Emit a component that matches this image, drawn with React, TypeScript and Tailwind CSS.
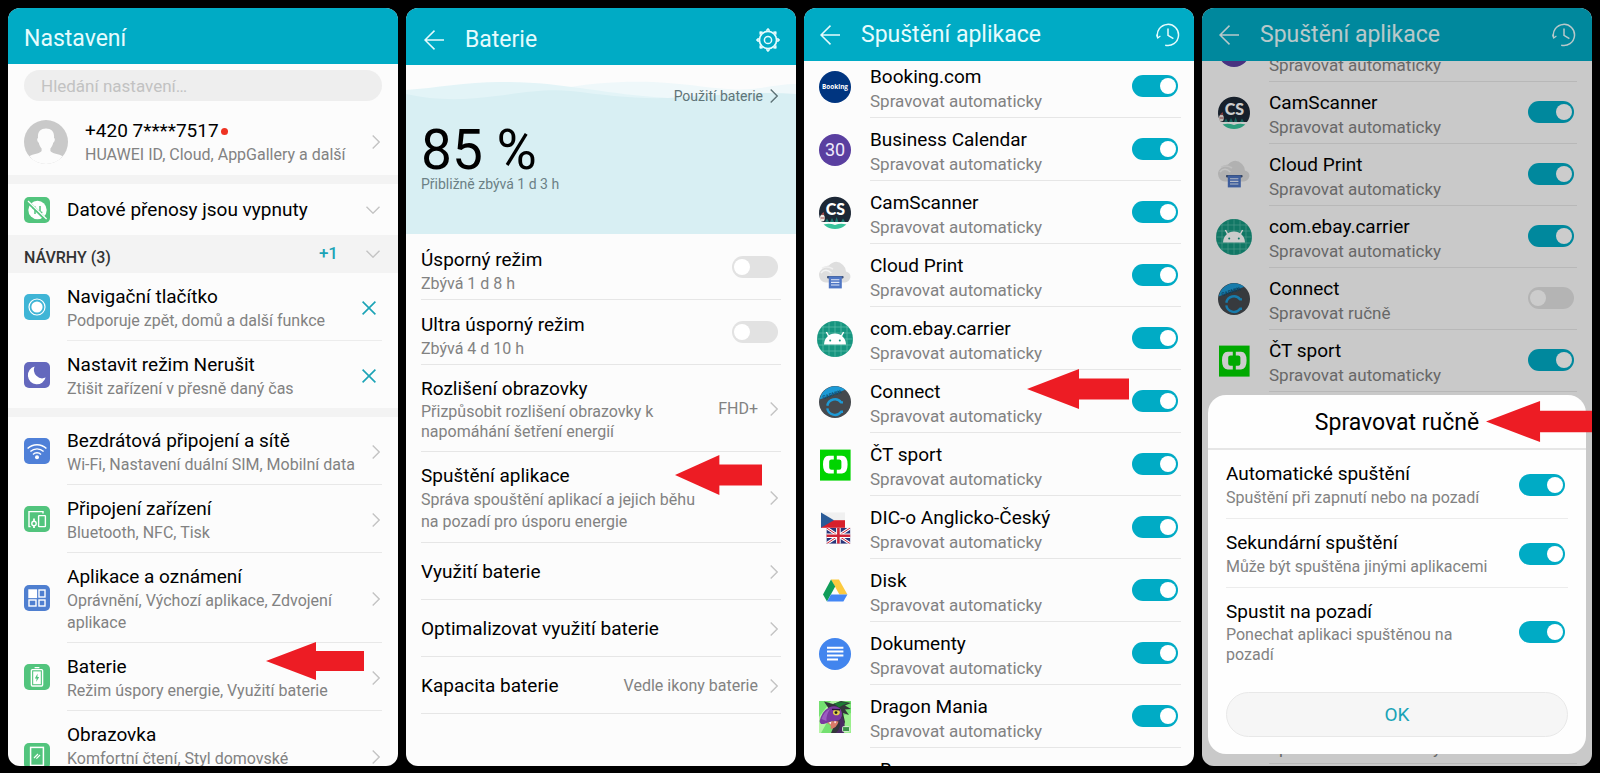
import * as React from "react";
import { clsx } from "clsx";

type SettingItem = { title: string; sub: string; icon: React.ReactNode; tall?: boolean; marked?: boolean };
type AppItem = { name: string; icon?: React.ReactNode; manual?: boolean; marked?: boolean };

/* --------------------------------- Shared --------------------------------- */

const titleText = "block text-[19px] leading-[26px] text-black";
const subText = "block text-[16px] leading-[22px] text-[#828282]";

function ChevronRight({ className = "text-[#c4c4c4]" }: { className?: string }) {
  return (
    <svg viewBox="0 0 8 14" className={clsx("h-3.5 w-2 shrink-0", className)} fill="none" stroke="currentColor" strokeWidth="1.4">
      <path d="M0.7 0.5 L7.2 7 L0.7 13.5" />
    </svg>
  );
}

function ChevronDown() {
  return (
    <svg viewBox="0 0 14 8" className="h-2 w-3.5 shrink-0 text-[#c4c4c4]" fill="none" stroke="currentColor" strokeWidth="1.4">
      <path d="M0.5 0.7 L7 7.2 L13.5 0.7" />
    </svg>
  );
}

function BackButton() {
  return (
    <button type="button" aria-label="Zpět" className="shrink-0">
      <svg viewBox="0 0 20 20" className="size-5" fill="none" stroke="#e6fbfd" strokeWidth="1.5">
        <path d="M10.5 0.6 L1 10 L10.5 19.4 M1 10 H20" />
      </svg>
    </button>
  );
}

function HistoryIcon() {
  return (
    <svg viewBox="0 0 24 24" className="size-6" fill="none" stroke="#e6fbfd" strokeWidth="1.5">
      <path d="M1.6 14.4 A10.6 10.6 0 1 1 9.2 22.2" />
      <path d="M0.6 11.6 L1.7 15 L4.4 13" strokeWidth="1.2" />
      <path d="M12 5.6 V12.4 L17.4 15.6" />
    </svg>
  );
}

function GearIcon() {
  const teeth = [0, 45, 90, 135, 180, 225, 270, 315];
  return (
    <svg viewBox="0 0 24 24" className="size-6" fill="none" stroke="#e6fbfd">
      <circle cx="12" cy="12" r="8.6" strokeWidth="1.7" />
      <circle cx="12" cy="12" r="3.6" strokeWidth="1.5" />
      {teeth.map((a) => (
        <path key={a} d="M10.4 2.8 L12 1 L13.6 2.8" strokeWidth="1.7" strokeLinejoin="round" transform={`rotate(${a} 12 12)`} />
      ))}
    </svg>
  );
}

function RedArrow({ className }: { className: string }) {
  return (
    <svg viewBox="0 0 100 40" preserveAspectRatio="none" className={clsx("pointer-events-none absolute z-10", className)} fill="#ed1c24">
      <path d="M0 20 L51 0 V9.4 H100 V30.6 H51 V40 Z" />
    </svg>
  );
}

function Toggle({ on }: { on: boolean }) {
  return (
    <input
      type="checkbox"
      role="switch"
      defaultChecked={on}
      className="flex h-[22px] w-[46px] shrink-0 appearance-none items-center rounded-full bg-[#e2e2e2] px-0.5 before:size-4 before:rounded-full before:bg-white checked:justify-end checked:bg-[#00abc5]"
    />
  );
}

function Phone({ children }: { children: React.ReactNode }) {
  return (
    <section className="relative flex min-w-0 flex-1 flex-col overflow-hidden rounded-xl bg-[#fcfcfc]">{children}</section>
  );
}

/* ------------------------------ Settings icons ----------------------------- */

function Tile({ color, children }: { color: string; children: React.ReactNode }) {
  return (
    <svg viewBox="0 0 26 26" className="size-[26px] shrink-0" fill="none" stroke="#fff" strokeWidth="1.4">
      <rect width="26" height="26" rx="5" fill={color} stroke="none" />
      {children}
    </svg>
  );
}

const dataOffIcon = (
  <Tile color="#52c47d">
    <circle cx="13.5" cy="13" r="9.2" fill="#fff" stroke="none" />
    <path d="M11 17 V9.6 M8.8 11.8 L11 9.6 M16 9 V17 M16 17 L18.2 14.8" stroke="#52c47d" strokeWidth="1.5" />
    <path d="M3.6 4.6 L22 22.6" stroke="#52c47d" strokeWidth="3.2" />
    <path d="M4 4 L22.6 22" strokeWidth="1.3" />
  </Tile>
);
const navIcon = (
  <Tile color="#3fb5d6">
    <circle cx="13" cy="13" r="8" strokeWidth="1.2" />
    <circle cx="13" cy="13" r="5.6" fill="#fff" stroke="none" />
  </Tile>
);
const moonIcon = (
  <Tile color="#6468bd">
    <path d="M10.6 4.6 A9 9 0 1 0 21.6 15.6 A8.4 8.4 0 0 1 10.6 4.6 Z" fill="#fff" stroke="none" />
  </Tile>
);
const wifiIcon = (
  <Tile color="#4f80d8">
    <path d="M3.6 10.6 A13.4 13.4 0 0 1 22.4 10.6 M6.4 13.6 A9.4 9.4 0 0 1 19.6 13.6 M9 16.4 A5.6 5.6 0 0 1 17 16.4" />
    <circle cx="13" cy="19.2" r="2" fill="#fff" stroke="none" />
  </Tile>
);
const devicesIcon = (
  <Tile color="#52c47d">
    <path d="M6.6 20.6 H5 V5.6 H19 V7.6" />
    <rect x="14.6" y="9.6" width="6.8" height="11" rx="0.6" />
    <path d="M10 12.4 V15 M10 20 V22" strokeWidth="1.8" />
    <circle cx="10" cy="17.4" r="2.2" />
  </Tile>
);
const appsIcon = (
  <Tile color="#4f7fd0">
    <rect x="5" y="5" width="7.4" height="7.4" fill="#fff" />
    <rect x="15" y="5" width="6" height="7" />
    <rect x="5" y="15" width="7" height="6" />
    <rect x="15" y="15" width="6" height="6" />
  </Tile>
);
const batteryIcon = (
  <Tile color="#52c47d">
    <path d="M10.6 3.6 H15.4" strokeWidth="1.4" />
    <rect x="7.4" y="5.6" width="11.2" height="16.4" rx="1" />
    <rect x="9.2" y="7.4" width="7.6" height="12.8" fill="#fff" stroke="none" />
    <path d="M13.6 9.6 L10.8 14.4 H12.6 L12.2 18 L15.2 13 H13.4 Z" fill="#52c47d" stroke="none" />
  </Tile>
);
const screenIcon = (
  <Tile color="#52c47d">
    <rect x="6.6" y="4.4" width="12.8" height="18" strokeWidth="1.5" />
    <path d="M10 15 L14 11 M12.4 15.6 L16 12" strokeWidth="1.1" />
  </Tile>
);

/* -------------------------------- App icons -------------------------------- */

function AppSvg({ children }: { children: React.ReactNode }) {
  return (
    <svg viewBox="0 0 32 32" className="size-8 overflow-visible">
      {children}
    </svg>
  );
}

const bookingIcon = (
  <AppSvg>
    <circle cx="16" cy="16" r="16" fill="#003580" />
    <text x="16" y="18.2" textAnchor="middle" fontSize="6.4" fontWeight="700" fontFamily="Open Sans, sans-serif" fill="#fff">Booking</text>
  </AppSvg>
);
const calendarIcon = (
  <AppSvg>
    <circle cx="16" cy="16" r="16" fill="#5a3fa0" />
    <text x="16" y="22.4" textAnchor="middle" fontSize="18" fontWeight="400" fontFamily="Roboto, sans-serif" fill="#efeafc">30</text>
  </AppSvg>
);
const camScannerIcon = (
  <AppSvg>
    <path d="M3 25 A16 16 0 1 1 29 25 Z" fill="#1d2836" />
    <path d="M6 25 L8 21.6 L10 25 Z M11 25 L13 21 L15 25 Z M16 25 L17.6 20 L19.4 25 Z M22 25 L24 21.6 L26 25 Z" fill="#1c7a70" />
    <text x="16.4" y="18" textAnchor="middle" fontSize="16" fontWeight="900" fontFamily="Lato, sans-serif" fill="#fff">CS</text>
    <ellipse cx="3.4" cy="21" rx="2.4" ry="3.6" fill="#efe7e2" />
    <path d="M2 17.6 L4.6 15 L5.4 18 Z M1.6 20.4 H5.4 V21.4 H1.6 Z" fill="#a04848" />
    <path d="M4.6 27.4 Q10.5 25.6 16 28 Q21.5 25.6 27.4 27.4 Q22 32 16 32 Q10 32 4.6 27.4 Z" fill="#37c39b" />
  </AppSvg>
);
const cloudPrintIcon = (
  <AppSvg>
    <path d="M7.6 22.6 A7.4 7.4 0 0 1 2.6 9.6 Q5 6 10 5.6 Q17 -1.6 24 5 Q26.6 7.4 27 11.4 Q32 13 31.4 17.6 Q30 22 26 22.6 Z" fill="#dedede" />
    <path d="M2 13 Q6.4 7.6 12.4 13" fill="none" stroke="#f4f4f4" strokeWidth="1.6" />
    <path d="M3 8.4 Q8 5.4 14 9" fill="none" stroke="#efefef" strokeWidth="1.6" />
    <rect x="8" y="16" width="16.6" height="2.4" rx="0.8" fill="#40557c" />
    <rect x="9.8" y="16.4" width="13" height="12" fill="#4f76c4" />
    <path d="M12 19.8 H20.4 M12 22.4 H20.4 M12 25 H20.4" stroke="#dfe8f8" strokeWidth="1.1" />
  </AppSvg>
);
const androidIcon = (
  <AppSvg>
    <circle cx="16" cy="16" r="18" fill="#16957f" />
    <path
      d="M4 3 V29 M10 -0.8 V32.8 M16 -2 V34 M22 -0.8 V32.8 M28 3 V29 M3 4 H29 M-0.8 10 H32.8 M-2 16 H34 M-0.8 22 H32.8 M3 28 H29"
      stroke="#5bbdac"
      strokeWidth="0.7"
    />
    <path d="M5 21.6 A11 11 0 0 1 27 21.6 Z" fill="#fff" />
    <path d="M9.6 13 L7.4 9 M22.4 13 L24.6 9" stroke="#fff" strokeWidth="1.5" />
    <circle cx="11.2" cy="17.6" r="1" fill="#16957f" />
    <circle cx="20.8" cy="17.6" r="1" fill="#16957f" />
  </AppSvg>
);
const connectIcon = (
  <AppSvg>
    <circle cx="16" cy="16" r="16" fill="#45494e" />
    <path d="M0.6 13.4 A16 16 0 0 1 26.4 3.8 Z" fill="#1d9ad6" />
    <text x="13.4" y="10.2" textAnchor="middle" fontSize="5" fontWeight="700" fontFamily="Roboto, sans-serif" fill="#0f4d74" transform="rotate(-19 13.4 10)">GARMIN</text>
    <path d="M24 16.4 H22.2 A7.8 7.8 0 0 0 8.3 19.8" fill="none" stroke="#1d9ad6" strokeWidth="2.4" />
    <path d="M8.3 22.4 A7.8 7.8 0 0 0 22.2 25.8 H24" fill="none" stroke="#1d9ad6" strokeWidth="2.4" />
  </AppSvg>
);
const ctSportIcon = (
  <AppSvg>
    <rect x="1" y="0.6" width="30.6" height="31" fill="#00d400" />
    <path d="M14.8 6.8 V10.4 H12.4 Q10.2 10.4 10.2 12.6 V18.6 Q10.2 20.8 12.4 20.8 H14.8 V24.4 H9.6 Q4 24.4 4 15.6 T9.6 6.8 Z" fill="#fff" />
    <path d="M17.8 6.8 V10.4 H20.2 Q22.4 10.4 22.4 12.6 V18.6 Q22.4 20.8 20.2 20.8 H17.8 V24.4 H23 Q28.6 24.4 28.6 15.6 T23 6.8 Z" fill="#fff" />
  </AppSvg>
);
const flagsIcon = (
  <AppSvg>
    <rect x="2" y="0.4" width="24" height="7.8" fill="#f0f0f0" />
    <rect x="2" y="8.2" width="24" height="7.6" fill="#d7202c" />
    <path d="M2 0.4 L15 8.2 L2 15.8 Z" fill="#2a5b97" />
    <svg x="7.4" y="15.8" width="24" height="16" viewBox="0 0 24 16">
      <rect width="24" height="16" fill="#29357a" />
      <path d="M0 0 L24 16 M24 0 L0 16" stroke="#fff" strokeWidth="3" />
      <path d="M0 0 L24 16 M24 0 L0 16" stroke="#cf2436" strokeWidth="1" />
      <path d="M12 0 V16 M0 8 H24" stroke="#fff" strokeWidth="4.6" />
      <path d="M12 0 V16 M0 8 H24" stroke="#cf2436" strokeWidth="2.6" />
    </svg>
  </AppSvg>
);
const driveIcon = (
  <AppSvg>
    <path d="M12 4.6 H20 L28.4 19.4 H20.4 Z" fill="#fcca3f" />
    <path d="M12 4.6 L16.2 11.6 L8 26.4 L4 19.4 Z" fill="#109d59" />
    <path d="M12 19.4 H28.4 L24.4 26.4 H8 Z" fill="#4386f5" />
  </AppSvg>
);
const docsIcon = (
  <AppSvg>
    <circle cx="16" cy="16" r="16" fill="#4285ee" />
    <path d="M8 9.8 H24.4 M8 13.6 H24.4 M8 17.6 H24.4 M8 21.4 H19" stroke="#fff" strokeWidth="2" />
  </AppSvg>
);
const dragonIcon = (
  <AppSvg>
    <rect width="32" height="32" fill="#74e070" />
    <path d="M0 16 L12 0 H20 L2 32 H0 Z" fill="#b3f5a4" />
    <path d="M20 16 L32 12 V32 H22 Z" fill="#9aef8c" />
    <path d="M5 0.6 L14 3 L22 0 L32 2 L26 4.6 L32 8 L26 8.6 L30 14 L24 12 L26 21 L22 32 H12 L15 25 L10 8 Z" fill="#33363a" />
    <path d="M15 2.4 Q22 0.4 29 2 Q23 4 20 6.6 Z" fill="#1c7a33" />
    <path d="M0.6 20 Q3 10 10 6.4 Q18 3.4 22 9 Q25 16 19.6 19.6 Q12 20 6.4 22.4 Q1 24.6 0.6 20 Z" fill="#7b3aa0" />
    <path d="M2.6 18 Q5 10.6 11 8 Q7 14 7.4 20 Z" fill="#9c5cc0" />
    <ellipse cx="17.4" cy="11.4" rx="3.4" ry="2.8" fill="#e5d34c" />
    <circle cx="17" cy="11.6" r="1.4" fill="#1b1b1b" />
    <path d="M13 8.4 L21 8.8" stroke="#2a1636" strokeWidth="1.4" />
    <path d="M8 22 Q14 19.4 19.6 20.4 Q18 27 11.4 28 Q13.4 24 8 22 Z" fill="#d97a68" />
    <path d="M10 21.4 L11.4 23.6 L12.4 20.8 M15 20.4 L16 22.6 L17.4 20.4" fill="#fff" />
    <path d="M20 20 Q23 26 17 32 H25 Q27 24 23.4 16 Z" fill="#4b2a63" />
    <rect x="23.6" y="25.6" width="7" height="5" rx="0.8" fill="#3c9348" stroke="#e8f6e4" strokeWidth="0.9" />
  </AppSvg>
);

/* ------------------------------ 1. Nastavení ------------------------------- */

const settings: SettingItem[] = [
  { title: "Bezdrátová připojení a sítě", sub: "Wi-Fi, Nastavení duální SIM, Mobilní data", icon: wifiIcon },
  { title: "Připojení zařízení", sub: "Bluetooth, NFC, Tisk", icon: devicesIcon },
  { title: "Aplikace a oznámení", sub: "Oprávnění, Výchozí aplikace, Zdvojení aplikace", icon: appsIcon },
  { title: "Baterie", sub: "Režim úspory energie, Využití baterie", icon: batteryIcon, marked: true },
  { title: "Obrazovka", sub: "Komfortní čtení, Styl domovské", icon: screenIcon, tall: true },
];

const suggestions = [
  { title: "Navigační tlačítko", sub: "Podporuje zpět, domů a další funkce", icon: navIcon },
  { title: "Nastavit režim Nerušit", sub: "Ztišit zařízení v přesně daný čas", icon: moonIcon },
];

function SettingsScreen() {
  return (
    <Phone>
      <header className="flex h-14 shrink-0 items-center bg-[#00abc5] px-4 pt-1.5">
        <h1 className="text-[23px] leading-7 text-[#e6fbfd]">Nastavení</h1>
      </header>

      <div className="px-4 pt-1.5">
        <input
          type="search"
          aria-label="Hledání nastavení"
          placeholder="Hledání nastavení…"
          className="block h-[31px] w-full rounded-full bg-[#eeeeee] px-[17px] text-[17px] outline-none placeholder:text-[#c2c2c2]"
        />
      </div>

      <a href="#ucet" className="flex items-center gap-[17px] pt-[17px] pr-[18px] pb-[9px] pl-4">
        <svg viewBox="0 0 44 44" className="size-11 shrink-0">
          <circle cx="22" cy="22" r="22" fill="#c9c9c9" />
          <path
            d="M22 8.6 C27.6 8.6 30.6 12 30 18 C31.6 18.6 30.6 22.4 29.2 22.8 C28.6 25.6 27.4 27.4 26.4 28.4 V31 C27.4 33.6 35.6 33.8 38.6 36.2 A21.6 21.6 0 0 1 5.4 36.2 C8.4 33.8 16.6 33.6 17.6 31 V28.4 C16.6 27.4 15.4 25.6 14.8 22.8 C13.4 22.4 12.4 18.6 14 18 C13.4 12 16.4 8.6 22 8.6 Z"
            fill="#fcfcfc"
          />
        </svg>
        <span className="min-w-0 flex-1">
          <span className="flex items-center gap-0.5 text-[19px] leading-[26px] text-black">
            +420 7****7517
            <span className="size-[7px] rounded-full bg-[#ee3323]" />
          </span>
          <span className={subText}>HUAWEI ID, Cloud, AppGallery a další</span>
        </span>
        <ChevronRight />
      </a>

      <div className="border-t-[9px] border-[#f3f3f3]">
        <button type="button" className="flex w-full items-center gap-[17px] pt-[13px] pr-[18px] pb-3 pl-4 text-left">
          {dataOffIcon}
          <span className={clsx(titleText, "flex-1")}>Datové přenosy jsou vypnuty</span>
          <ChevronDown />
        </button>
      </div>

      <button type="button" className="flex h-[38px] shrink-0 items-center bg-[#f3f3f3] pr-[18px] pl-4 text-left">
        <span className="flex-1 pt-2 text-[16px] leading-6 font-medium text-[#333]">NÁVRHY (3)</span>
        <span className="pr-7 text-[17px] font-medium text-[#1ba3b6]">+1</span>
        <ChevronDown />
      </button>

      <ul className="border-b-[9px] border-[#f3f3f3]">
        {suggestions.map((s, i) => (
          <li key={s.title} className="flex items-center gap-[17px] pl-4">
            {s.icon}
            <div className={clsx("mr-4 flex flex-1 items-center border-[#ececec] pt-[11px] pr-1.5 pb-2", i === 0 && "border-b")}>
              <div className="min-w-0 flex-1">
                <p className={titleText}>{s.title}</p>
                <p className={subText}>{s.sub}</p>
              </div>
              <button type="button" aria-label={`Zavřít: ${s.title}`}>
                <svg viewBox="0 0 14 14" className="size-3.5" fill="none" stroke="#1ba3b6" strokeWidth="1.6">
                  <path d="M0.6 0.6 L13.4 13.4 M13.4 0.6 L0.6 13.4" />
                </svg>
              </button>
            </div>
          </li>
        ))}
      </ul>

      <nav>
        {settings.map((s) => (
          <a key={s.title} href="#nastaveni" className="relative flex items-center gap-[17px] pl-4">
            {s.icon}
            <span
              className={clsx(
                "mr-4 flex min-w-0 flex-1 items-center border-b border-[#e8e8e8] pt-[11px] pr-0.5 pb-2",
                s.tall && "min-h-[90px]"
              )}
            >
              <span className={clsx("min-w-0 flex-1", s.tall && "self-start")}>
                <span className={titleText}>{s.title}</span>
                <span className={subText}>{s.sub}</span>
              </span>
              <ChevronRight />
            </span>
            {s.marked && <RedArrow className="-top-px right-[34px] h-[38px] w-[98px]" />}
          </a>
        ))}
      </nav>
    </Phone>
  );
}

/* -------------------------------- 2. Baterie ------------------------------- */

const batteryRow = "relative mx-[15px] flex items-center border-b border-[#e6e6e6] pr-[3px]";

function BatteryScreen() {
  return (
    <Phone>
      <header className="flex h-[57px] shrink-0 items-center gap-[21px] bg-[#00abc5] pt-1.5 pr-4 pl-[18px]">
        <BackButton />
        <h1 className="flex-1 text-[23px] leading-7 text-[#e6fbfd]">Baterie</h1>
        <button type="button" aria-label="Nastavení baterie">
          <GearIcon />
        </button>
      </header>

      <div className="relative h-[169px] shrink-0">
        <svg viewBox="0 0 390 169" preserveAspectRatio="none" className="absolute inset-0 size-full">
          <path d="M150 24 C190 17 230 15 262 18 C300 21 320 26 345 24 C365 22 375 19 390 19 V60 H150 Z" fill="#eff8fa" />
          <path d="M0 25 C30 23 60 17 94 17 C130 17 150 20 174 23 C210 28 230 31 262 33 V60 H0 Z" fill="#e3f4f7" />
          <path d="M0 29 C30 36 60 35 90 31 C120 27 140 24 165 26 C200 30 225 34 262 33 C310 31 350 26 390 29 V169 H0 Z" fill="#d8eff3" />
        </svg>
        <div className="relative px-[15px] pt-5">
          <a href="#pouziti" className="flex items-center justify-end gap-[7px] pr-[3px] text-[14px] leading-[22px] text-[#5f7478]">
            Použití baterie
            <ChevronRight className="text-[#5f7478]" />
          </a>
          <p className="mt-[18px] text-[55px] leading-[50px] text-black">85 %</p>
          <p className="text-[14px] leading-[18px] text-[#6b8085]">Přibližně zbývá 1 d 3 h</p>
        </div>
      </div>

      <label className={clsx(batteryRow, "pt-[5px] pb-1")}>
        <span className="flex-1 pt-2">
          <span className={titleText}>Úsporný režim</span>
          <span className={subText}>Zbývá 1 d 8 h</span>
        </span>
        <Toggle on={false} />
      </label>
      <label className={clsx(batteryRow, "py-1")}>
        <span className="flex-1 pt-2">
          <span className={titleText}>Ultra úsporný režim</span>
          <span className={subText}>Zbývá 4 d 10 h</span>
        </span>
        <Toggle on={false} />
      </label>
      <a href="#rozliseni" className={clsx(batteryRow, "pt-[11px] pb-[9px]")}>
        <span className="flex-1">
          <span className={titleText}>Rozlišení obrazovky</span>
          <span className="block max-w-[260px] text-[16px] leading-5 text-[#828282]">
            Přizpůsobit rozlišení obrazovky k napomáhání šetření energií
          </span>
        </span>
        <span className="pr-3 text-[16px] text-[#828282]">FHD+</span>
        <ChevronRight />
      </a>
      <a href="#spusteni" className={clsx(batteryRow, "pt-[11px] pb-[9px]")}>
        <span className="flex-1">
          <span className={titleText}>Spuštění aplikace</span>
          <span className={clsx(subText, "max-w-[290px]")}>
            Správa spouštění aplikací a jejich běhu na pozadí pro úsporu energie
          </span>
        </span>
        <ChevronRight />
        <RedArrow className="top-[3px] right-[19px] h-10 w-[87px]" />
      </a>
      {["Využití baterie", "Optimalizovat využití baterie", "Kapacita baterie"].map((t) => (
        <a key={t} href="#baterie" className={clsx(batteryRow, "pt-4 pb-3.5")}>
          <span className={clsx(titleText, "flex-1")}>{t}</span>
          {t === "Kapacita baterie" && <span className="pr-3 text-[16px] leading-6 text-[#828282]">Vedle ikony baterie</span>}
          <ChevronRight />
        </a>
      ))}
    </Phone>
  );
}

/* --------------------------- 3. Spuštění aplikace -------------------------- */

const apps: AppItem[] = [
  { name: "Booking.com", icon: bookingIcon },
  { name: "Business Calendar", icon: calendarIcon },
  { name: "CamScanner", icon: camScannerIcon },
  { name: "Cloud Print", icon: cloudPrintIcon },
  { name: "com.ebay.carrier", icon: androidIcon },
  { name: "Connect", icon: connectIcon, marked: true },
  { name: "ČT sport", icon: ctSportIcon },
  { name: "DIC-o Anglicko-Český", icon: flagsIcon },
  { name: "Disk", icon: driveIcon },
  { name: "Dokumenty", icon: docsIcon },
  { name: "Dragon Mania", icon: dragonIcon },
  { name: "eBay" },
];

function LaunchHeader({ className }: { className: string }) {
  return (
    <header className={clsx("z-10 flex h-[53px] shrink-0 items-center gap-[21px] bg-[#00abc5]", className)}>
      <BackButton />
      <h1 className="flex-1 text-[23px] leading-7 text-[#e6fbfd]">Spuštění aplikace</h1>
      <button type="button" aria-label="Historie">
        <HistoryIcon />
      </button>
    </header>
  );
}

function AppRow({ app, className, bodyClassName }: { app: AppItem; className: string; bodyClassName: string }) {
  return (
    <label className={clsx("relative flex items-center gap-[19px]", className)}>
      <span className="size-8 shrink-0">{app.icon}</span>
      <span className={clsx("flex flex-1 items-center self-stretch border-b border-[#e6e6e6] pr-[3px]", bodyClassName)}>
        <span className="flex-1 pt-1">
          <span className="block min-h-[26px] text-[19px] leading-[26px] text-black">{app.name}</span>
          <span className="block text-[17px] leading-[22px] text-[#828282]">
            {app.manual ? "Spravovat ručně" : "Spravovat automaticky"}
          </span>
        </span>
        <Toggle on={!app.manual} />
      </span>
      {app.marked && <RedArrow className="-top-px right-[65px] h-10 w-[102px]" />}
    </label>
  );
}

function LaunchScreen() {
  return (
    <Phone>
      <LaunchHeader className="pr-3.5 pl-4" />
      <div className="-mt-1.5">
        {apps.map((a) => (
          <AppRow key={a.name} app={a} className="h-[63px] pl-[15px]" bodyClassName="mr-[13px]" />
        ))}
      </div>
    </Phone>
  );
}

/* ---------------------------- 4. Spravovat ručně --------------------------- */

const manualApps = apps.slice(1, 7).map((a) => ({ ...a, manual: a.name === "Connect", marked: false }));

const options = [
  { title: "Automatické spuštění", sub: "Spuštění při zapnutí nebo na pozadí" },
  { title: "Sekundární spuštění", sub: "Může být spuštěna jinými aplikacemi" },
  { title: "Spustit na pozadí", sub: "Ponechat aplikaci spuštěnou na pozadí" },
];

function ManualScreen() {
  return (
    <Phone>
      <LaunchHeader className="pr-4 pl-[17px]" />
      <div className="-mt-[41px]">
        {manualApps.map((a) => (
          <AppRow key={a.name} app={a} className="h-[62px] pl-4" bodyClassName="mr-[15px] pb-0.5" />
        ))}
        {/* rows under the dialog stay empty, only the last one peeks out below it */}
        <AppRow app={{ name: "" }} className="mt-[310px] h-[62px] pl-4" bodyClassName="mr-[15px]" />
      </div>

      <div className="absolute inset-0 z-20 flex flex-col justify-end bg-black/20 px-1.5 pb-3">
        <div role="dialog" aria-labelledby="dialog-title" className="relative rounded-[18px] bg-[#fefefe]">
          <h2 id="dialog-title" className="border-b-2 border-[#e6e6e6] pt-3.5 pb-[11px] text-center text-[23px] leading-7 text-black">
            Spravovat ručně
          </h2>
          <RedArrow className="top-1.5 -right-1.5 h-[41px] w-[106px]" />
          <div className="px-[18px] pb-[17px]">
            {options.map((o, i) => (
              <label
                key={o.title}
                className={clsx("flex items-center pr-[3px]", i < 2 ? "border-b border-[#ececec] pt-[11px] pb-[9px]" : "pt-[11px] pb-[13px]")}
              >
                <span className="flex-1">
                  <span className={titleText}>{o.title}</span>
                  <span className={clsx("block max-w-[270px] text-[16px] text-[#828282]", i < 2 ? "leading-[22px]" : "leading-5")}>
                    {o.sub}
                  </span>
                </span>
                <Toggle on />
              </label>
            ))}
            <button type="button" className="mt-3.5 block h-[45px] w-full rounded-full border border-[#e8e8e8] bg-[#f6f6f6] pt-0.5 text-[19px] text-[#1ba3b6]">
              OK
            </button>
          </div>
        </div>
      </div>
    </Phone>
  );
}

const App = (): React.JSX.Element => (
  <main className="flex h-screen gap-2 overflow-hidden bg-black p-2 pb-[7px] font-[Roboto,sans-serif]">
    <SettingsScreen />
    <BatteryScreen />
    <LaunchScreen />
    <ManualScreen />
  </main>
);

export default App;
